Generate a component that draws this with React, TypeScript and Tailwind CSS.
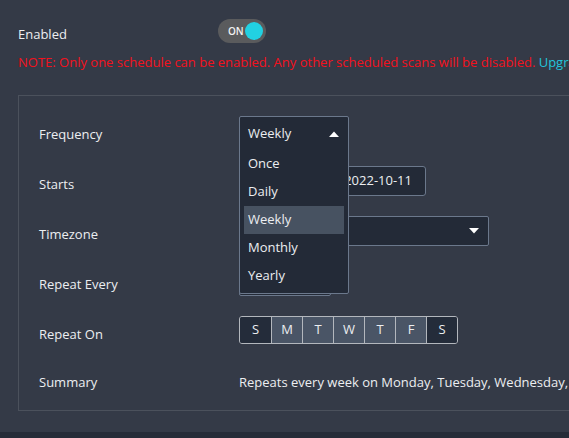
import React from "react";

const days = [
  { d: "S", on: false },
  { d: "M", on: true },
  { d: "T", on: true },
  { d: "W", on: true },
  { d: "T", on: true },
  { d: "F", on: true },
  { d: "S", on: false },
];

function Caret({ up }: { up?: boolean }) {
  return (
    <svg width="10" height="6" viewBox="0 0 10 6" className="block">
      {up ? <path d="M0 6 L5 0.5 L10 6 Z" fill="#ffffff" /> : <path d="M0 0 L10 0 L5 5.5 Z" fill="#ffffff" />}
    </svg>
  );
}

function Row({ label, children, labelPt = "pt-[9px]", h = "h-[50px]" }: { label: string; children?: React.ReactNode; labelPt?: string; h?: string }) {
  return (
    <div className={`flex items-start ${h}`}>
      <div className={`w-[200px] shrink-0 text-[13px] leading-[18px] text-[#eceef1] ${labelPt}`}>{label}</div>
      <div className="relative">{children}</div>
    </div>
  );
}

export default function App() {
  return (
    <div
      className="w-[569px] h-[438px] overflow-hidden bg-[#343a47] text-[#eceef1] relative"
      style={{ fontFamily: '"Open Sans", "Noto Sans", sans-serif' }}
    >
      <div className="pl-[18px]">
        {/* Enabled row */}
        <div className="flex items-start pt-[19px] h-[53px]">
          <div className="w-[200px] text-[13px] leading-[18px] pt-[6px]">Enabled</div>
          <div className="w-[48px] h-[24px] rounded-full bg-[#5a5b5d] flex items-center justify-between pl-[10px] pr-[3px]">
            <span className="text-[10px] font-semibold text-[#f2f2f2] leading-none">ON</span>
            <span className="w-[18px] h-[18px] rounded-full bg-[#22d1e2]" />
          </div>
        </div>
        {/* Note */}
        <div className="whitespace-nowrap text-[13px] leading-[18px] text-[#f3111d]">
          NOTE: Only one schedule can be enabled. Any other scheduled scans will be disabled.{" "}
          <span className="text-[#22c5dc]">Upgrade</span>
        </div>
        {/* Panel */}
        <div className="mt-[24px] w-[620px] border border-[#4b515c] pl-[20px] pt-[20px] pb-[14px]">
          <Row label="Frequency">
            <div className="w-[110px] h-[32px]" />
            {/* open dropdown */}
            <div className="absolute left-0 top-0 z-10 w-[110px] h-[178px] bg-[#232a37] border border-[#6b788c] rounded-[2px] px-[4px]">
              <div className="h-[33px] flex items-center justify-between pl-[4px] pr-[5px] text-[13px]">
                <span>Weekly</span>
                <Caret up />
              </div>
              {["Once", "Daily", "Weekly", "Monthly", "Yearly"].map((o) => (
                <div
                  key={o}
                  className={`h-[28px] flex items-center pl-[4px] text-[13px] ${o === "Weekly" ? "bg-[#475261]" : ""}`}
                >
                  {o}
                </div>
              ))}
            </div>
          </Row>
          <Row label="Starts">
            <div className="w-[187px] h-[30px] bg-[#232a37] border border-[#6b788c] rounded-[3px] flex items-center justify-end pr-[13px] text-[13px]">
              2022-10-11
            </div>
          </Row>
          <Row label="Timezone">
            <div className="w-[250px] h-[30px] bg-[#232a37] border border-[#6b788c] rounded-[2px] flex items-center justify-end pr-[9px]">
              <Caret />
            </div>
          </Row>
          <Row label="Repeat Every">
            <div className="w-[92px] h-[30px] bg-[#232a37] border border-[#6b788c] rounded-[2px]" />
          </Row>
          <Row label="Repeat On">
            <div className="flex border border-[#b3b7bd] rounded-[3px] overflow-hidden">
              {days.map((d, i) => (
                <div
                  key={i}
                  className={`w-[31px] h-[26px] flex items-center justify-center text-[13px] ${i > 0 ? "border-l border-[#b3b7bd]" : ""} ${d.on ? "bg-[#4a5566]" : "bg-[#242c3a]"}`}
                >
                  {d.d}
                </div>
              ))}
            </div>
          </Row>
          <Row label="Summary" h="h-[30px]" labelPt="pt-[7px]">
            <div className="pt-[7px] text-[13px] leading-[18px] whitespace-nowrap">
              Repeats every week on Monday, Tuesday, Wednesday, Thursday, Friday
            </div>
          </Row>
        </div>
      </div>
      <div className="absolute left-0 right-0 bottom-0 h-[6px] bg-[#262c38]" />
    </div>
  );
}
